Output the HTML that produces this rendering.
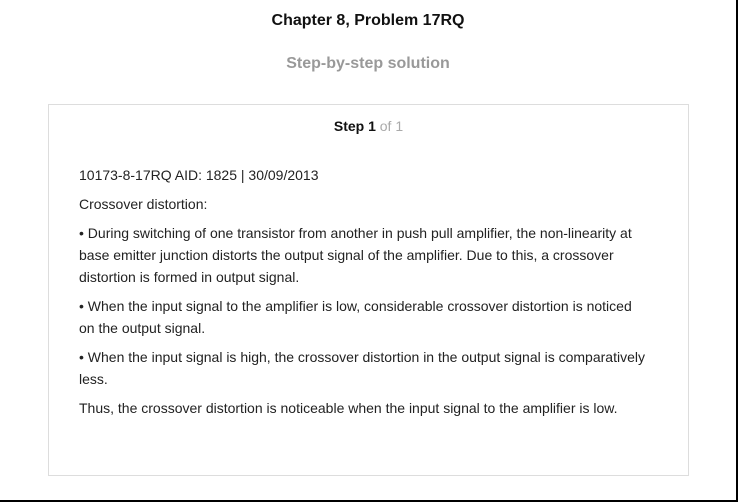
<!DOCTYPE html>
<html><head><style>
html,body{margin:0;padding:0;}
body{width:738px;height:503px;position:relative;background:#fff;font-family:"Liberation Sans",Arial,sans-serif;color:#222;overflow:hidden;}
.frame{position:absolute;left:0;top:0;width:736px;height:500px;border-right:2px solid #000;border-bottom:2px solid #000;}
h1{position:absolute;top:12px;left:0;width:736px;text-align:center;font-size:16px;font-weight:bold;margin:0;color:#111;}
h2{position:absolute;top:55px;left:0;width:736px;text-align:center;font-size:16px;font-weight:bold;margin:0;color:#999;}
.box{position:absolute;left:48px;top:104px;width:639px;height:370px;border:1px solid #ddd;}
.step{position:absolute;top:13px;left:0;width:100%;text-align:center;font-size:14px;color:#111;}
.step span{color:#aaa;}
.content{position:absolute;left:30px;top:59px;width:572px;font-size:14px;line-height:22px;color:#222;}
.content p{margin:0 0 7px 0;}
</style></head><body>
<div class="frame"></div>
<h1>Chapter 8, Problem 17RQ</h1>
<h2>Step-by-step solution</h2>
<div class="box">
<div class="step"><b>Step 1</b> <span>of 1</span></div>
<div class="content">
<p>10173-8-17RQ AID: 1825 | 30/09/2013</p>
<p>Crossover distortion:</p>
<p>• During switching of one transistor from another in push pull amplifier, the non-linearity at base emitter junction distorts the output signal of the amplifier. Due to this, a crossover distortion is formed in output signal.</p>
<p>• When the input signal to the amplifier is low, considerable crossover distortion is noticed on the output signal.</p>
<p>• When the input signal is high, the crossover distortion in the output signal is comparatively less.</p>
<p>Thus, the crossover distortion is noticeable when the input signal to the amplifier is low.</p>
</div>
</div>
</body></html>
